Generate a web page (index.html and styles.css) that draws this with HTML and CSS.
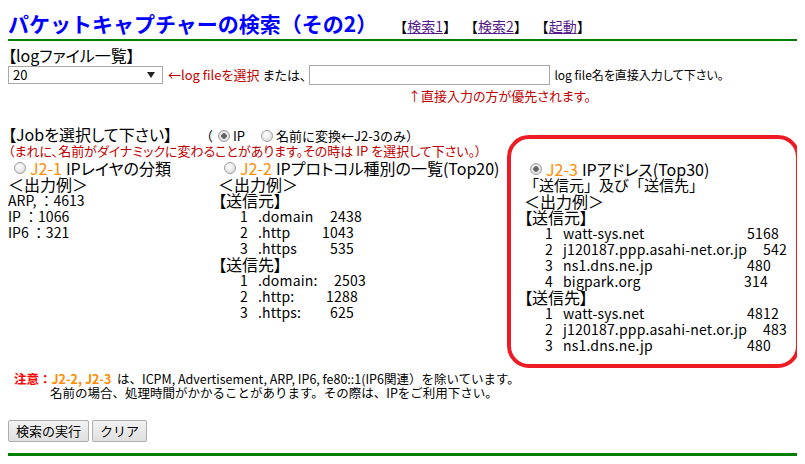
FILE: index.html
```html
<!DOCTYPE html>
<html lang="ja">
<head>
<meta charset="utf-8">
<title>パケットキャプチャーの検索（その2）</title>
<link rel="stylesheet" href="styles.css">
</head>
<body>
<div class="header">
  <h1 class="title">パケットキャプチャーの検索（その2）</h1>
  <nav class="links">
    <span class="lk">【<a href="#">検索1</a>】</span>
    <span class="lk">【<a href="#">検索2</a>】</span>
    <span class="lk">【<a href="#">起動</a>】</span>
  </nav>
</div>
<hr class="rule">

<div class="sec-title">【logファイル一覧】</div>
<div class="filerow">
  <span class="selwrap"><select class="sel"><option>20</option></select></span>
  <span class="red">←log fileを選択</span>
  <span class="mata">または、</span>
  <input class="txt" type="text">
  <span class="small">log file名を直接入力して下さい。</span>
</div>
<div class="prio red">↑直接入力の方が優先されます。</div>

<div class="jobrow">
  <span class="sec-title">【Jobを選択して下さい】</span>
  <span class="opts">（<input class="rd r1" type="radio" name="m" checked>IP<input class="rd r2" type="radio" name="m">名前に変換←J2-3のみ）</span>
</div>
<div class="warn red">（まれに、名前がダイナミックに変わることがあります。その時は IP を選択して下さい。）</div>

<div class="cols">
  <div class="col c1">
    <div class="ln"><input class="rd" type="radio" name="j"><span class="jid">J2-1</span> IPレイヤの分類</div>
    <div class="ln big">＜出力例＞</div>
    <div class="ln dat">ARP, ：4613</div>
    <div class="ln dat">IP ：1066</div>
    <div class="ln dat">IP6 ：321</div>
  </div>
  <div class="col c2">
    <div class="ln"><input class="rd" type="radio" name="j"><span class="jid">J2-2</span> IPプロトコル種別の一覧(Top20)</div>
    <div class="ln big">＜出力例＞</div>
    <div class="ln big">【送信元】</div>
    <div class="ln item"><span class="idx">1</span><span class="nm">.domain</span><span class="val">2438</span></div>
    <div class="ln item"><span class="idx">2</span><span class="nm">.http</span><span class="val m8">1043</span></div>
    <div class="ln item"><span class="idx">3</span><span class="nm">.https</span><span class="val">535</span></div>
    <div class="ln big">【送信先】</div>
    <div class="ln item"><span class="idx">1</span><span class="nm">.domain:</span><span class="val p4">2503</span></div>
    <div class="ln item"><span class="idx">2</span><span class="nm">.http:</span><span class="val m4">1288</span></div>
    <div class="ln item"><span class="idx">3</span><span class="nm">.https:</span><span class="val">625</span></div>
  </div>
  <div class="col c3">
    <div class="ln"><input class="rd" type="radio" name="j" checked><span class="jid">J2-3</span> IPアドレス(Top30)</div>
    <div class="ln big kakko">「送信元」及び「送信先」</div>
    <div class="ln big">＜出力例＞</div>
    <div class="ln big">【送信元】</div>
    <div class="ln item"><span class="idx">1</span><span class="nm">watt-sys.net</span><span class="val">5168</span></div>
    <div class="ln item"><span class="idx">2</span><span class="nm">j120187.ppp.asahi-net.or.jp</span><span class="val p16">542</span></div>
    <div class="ln item"><span class="idx">3</span><span class="nm">ns1.dns.ne.jp</span><span class="val">480</span></div>
    <div class="ln item"><span class="idx">4</span><span class="nm">bigpark.org</span><span class="val m3">314</span></div>
    <div class="ln big">【送信先】</div>
    <div class="ln item"><span class="idx">1</span><span class="nm">watt-sys.net</span><span class="val">4812</span></div>
    <div class="ln item"><span class="idx">2</span><span class="nm">j120187.ppp.asahi-net.or.jp</span><span class="val p16">483</span></div>
    <div class="ln item"><span class="idx">3</span><span class="nm">ns1.dns.ne.jp</span><span class="val">480</span></div>
  </div>
</div>

<div class="note">
  <div><span class="chui">注意：</span><span class="jids">J2-2, J2-3</span>&nbsp; は、ICPM, Advertisement, ARP, IP6, fe80::1(IP6関連）を除いています。</div>
  <div class="note2">名前の場合、処理時間がかかることがあります。その際は、IPをご利用下さい。</div>
</div>

<div class="btns">
  <button class="btn" type="button">検索の実行</button>
  <button class="btn" type="button">クリア</button>
</div>
<hr class="rule bottom">

<div class="hl"></div>
</body>
</html>
```
FILE: styles.css
```css
html, body { margin: 0; padding: 0; }
body {
  margin: 8px;
  font-family: "Noto Sans CJK JP", "Noto Sans", sans-serif;
  font-feature-settings: "palt";
  color: #000;
  background: #fff;
  font-size: 14px;
  line-height: 16px;
  position: relative;
}
.header {
  display: flex;
  align-items: baseline;
  height: 30px;
}
.title {
  margin: 0;
  font-size: 21px;
  line-height: 30px;
  font-weight: bold;
  color: #0000ff;
  font-feature-settings: normal;
}
.links { margin-left: 16px; display: flex; gap: 7px; font-size: 14px; font-feature-settings: normal; }
.lk a { color: #551a8b; text-decoration: underline; }
.rule {
  margin: 1px 0 0 0;
  border: 0;
  height: 2px;
  background: #008000;
}
.rule.bottom { height: 3px; margin-top: 11px; }

.sec-title { font-size: 16px; line-height: 20px; display: block; }
div.sec-title { margin-top: 4px; }
.filerow {
  display: flex;
  align-items: center;
  height: 20px;
}
.selwrap { position: relative; display: inline-block; width: 155px; height: 18px; }
.sel {
  -webkit-appearance: none;
  appearance: none;
  width: 155px;
  height: 18px;
  border: 1px solid #a9a9a9;
  background: #fff;
  font: 13px "Noto Sans CJK JP", sans-serif;
  padding: 0 0 0 4px;
  margin: 0;
  box-sizing: border-box;
  line-height: 16px;
  color: #000;
}
.selwrap::after {
  content: "";
  position: absolute;
  right: 8px;
  top: 6px;
  border-left: 4px solid transparent;
  border-right: 4px solid transparent;
  border-top: 6px solid #222;
}
.red { color: #c00000; }
.filerow .red { font-size: 13px; margin-left: 5px; }
.mata { font-size: 13px; margin-left: 3px; }
.txt {
  width: 241px;
  height: 20px;
  box-sizing: border-box;
  border: 1px solid #a9a9a9;
  margin: 0 0 0 3px;
  padding: 0;
}
.small { font-size: 12px; margin-left: 4px; }
.prio { font-size: 13px; margin-left: 400px; line-height: 18px; margin-top: 2px; }

.jobrow { display: flex; align-items: baseline; margin-top: 19px; height: 18px; }
.opts { font-size: 13px; margin-left: 28px; display: inline-flex; align-items: center; font-feature-settings: normal; }
.opts .r1 { margin: 0 3px 0 5px; }
.opts .r2 { margin: 0 3px 0 16px; }
.warn { font-size: 13px; line-height: 16px; margin-top: 1px; }

.rd {
  -webkit-appearance: none;
  appearance: none;
  width: 12px;
  height: 12px;
  border-radius: 50%;
  border: 1px solid #a0a0a0;
  background: radial-gradient(circle at 40% 35%, #ffffff 0%, #e6e6e6 60%, #cfcfcf 100%);
  margin: 0 4px 0 6px;
  vertical-align: -1px;
  box-sizing: border-box;
}
.rd:checked {
  background: radial-gradient(circle, #5a5a5a 0, #6a6a6a 2.5px, #e8e8e8 3px, #d4d4d4 100%);
}

.cols { display: grid; grid-template-columns: 210px 306px 1fr; margin-top: 0; }
.ln { line-height: 16px; height: 16px; white-space: nowrap; font-size: 14px; }
.col .ln:first-child { font-size: 16px; display: flex; align-items: center; height: 17px; }
.c3 .ln:first-child { margin-top: 2px; height: 16px; }
.jid { color: #ff8c00; font-weight: normal; font-size: 16px; margin-right: 4px; }
.big { font-size: 16px; }
.kakko { font-size: 15px; font-feature-settings: normal; }
.dat { font-feature-settings: normal; }
.item { display: flex; font-feature-settings: normal; letter-spacing: 0.2px; }
.idx { width: 18px; margin-left: 22px; }
.c2 .nm { width: 72px; }
.c3 .idx { margin-left: 21px; }
.c3 .nm { width: 184px; }
.m8 { margin-left: -8px; }
.m4 { margin-left: -4px; }
.p4 { margin-left: 4px; }
.p16 { margin-left: 16px; }
.m3 { margin-left: -3px; }

.note { font-size: 12.5px; line-height: 14px; margin-top: 19px; padding-left: 6px; font-feature-settings: normal; }
.chui { color: #ff0000; font-weight: bold; }
.jids { color: #ff8c00; font-weight: bold; }
.note2 { padding-left: 36px; }

.btns { margin-top: 20px; display: flex; gap: 3px; }
.btn {
  font: 13px "Noto Sans CJK JP", sans-serif;
  height: 22px;
  padding: 0 7px;
  border: 1px solid #adadad;
  border-radius: 2px;
  background: linear-gradient(#f2f2f2, #e0e0e0);
  color: #000;
  line-height: 18px;
}

.hl {
  position: absolute;
  left: 499px;
  top: 127px;
  width: 293px;
  height: 233px;
  box-sizing: border-box;
  border: 4px solid #ed1c24;
  border-radius: 22px;
  pointer-events: none;
}
```
